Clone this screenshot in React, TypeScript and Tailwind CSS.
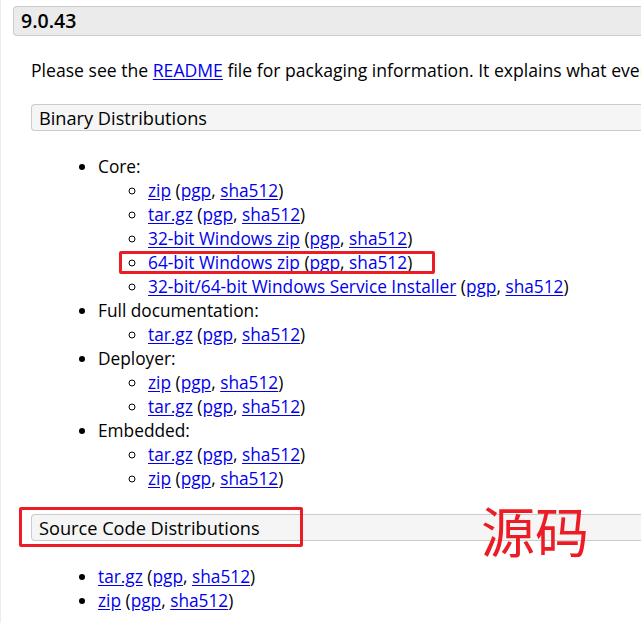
import React from "react";

type Group = {
  title: string;
  files: string[];
};

const binaryGroups: Group[] = [
  {
    title: "Core:",
    files: [
      "zip",
      "tar.gz",
      "32-bit Windows zip",
      "64-bit Windows zip",
      "32-bit/64-bit Windows Service Installer",
    ],
  },
  { title: "Full documentation:", files: ["tar.gz"] },
  { title: "Deployer:", files: ["zip", "tar.gz"] },
  { title: "Embedded:", files: ["tar.gz", "zip"] },
];

function A({ label }: { label: string }) {
  return <a className="text-[#0000ee] underline underline-offset-2">{label}</a>;
}

function FileLine({ name }: { name: string }) {
  return (
    <>
      <A label={name} /> (<A label="pgp" />, <A label="sha512" />)
    </>
  );
}

function SectionHeader({ title }: { title: string }) {
  return (
    <div className="ml-[30px] flex h-[27px] items-center rounded-l-[4px] border border-r-0 border-[#cccccc] bg-[#f5f5f5] pl-[7px] text-[18.2px] font-medium text-black">
      {title}
    </div>
  );
}

export default function App() {
  return (
    <div className="relative h-[623px] w-[641px] overflow-hidden border-l border-[#ececec] bg-white font-['Open_Sans',sans-serif] text-[17.3px] leading-[24px] text-black">
      <div className="pt-[6px]">
        <div className="ml-[12px] flex h-[30px] items-center rounded-l-[4px] border border-r-0 border-[#cccccc] bg-[#ebebeb] pl-[7px] text-[19.5px] font-semibold">
          9.0.43
        </div>
      </div>

      <p className="mt-[22px] ml-[30px] whitespace-nowrap text-[17.6px]">
        Please see the <A label="README" /> file for packaging information. It explains what every distribution contains.
      </p>

      <div className="mt-[22px]">
        <SectionHeader title="Binary Distributions" />
      </div>

      <ul className="mt-[24px] list-disc pl-[97px]">
        {binaryGroups.map((g) => (
          <li key={g.title}>
            {g.title}
            <ul className="list-[circle] pl-[50px]">
              {g.files.map((f, i) => (
                <li key={f + i} className="whitespace-nowrap">
                  <FileLine name={f} />
                </li>
              ))}
            </ul>
          </li>
        ))}
      </ul>

      <div className="mt-[23px]">
        <SectionHeader title="Source Code Distributions" />
      </div>

      <ul className="mt-[24px] list-disc pl-[97px]">
        {["tar.gz", "zip"].map((f) => (
          <li key={f} className="whitespace-nowrap">
            <FileLine name={f} />
          </li>
        ))}
      </ul>

      {/* annotations */}
      <div className="absolute left-[118px] top-[251px] h-[23px] w-[316px] rounded-[2px] border-[3px] border-[#ec1c24]" />
      <div className="absolute left-[18px] top-[507px] h-[40px] w-[284px] rounded-[2px] border-[3px] border-[#ec1c24]" />
      <div className="absolute left-[480px] top-[494px] font-['Noto_Sans_CJK_SC',sans-serif] text-[54px] leading-[72px] text-[#ec1c24]">
        源码
      </div>
    </div>
  );
}
